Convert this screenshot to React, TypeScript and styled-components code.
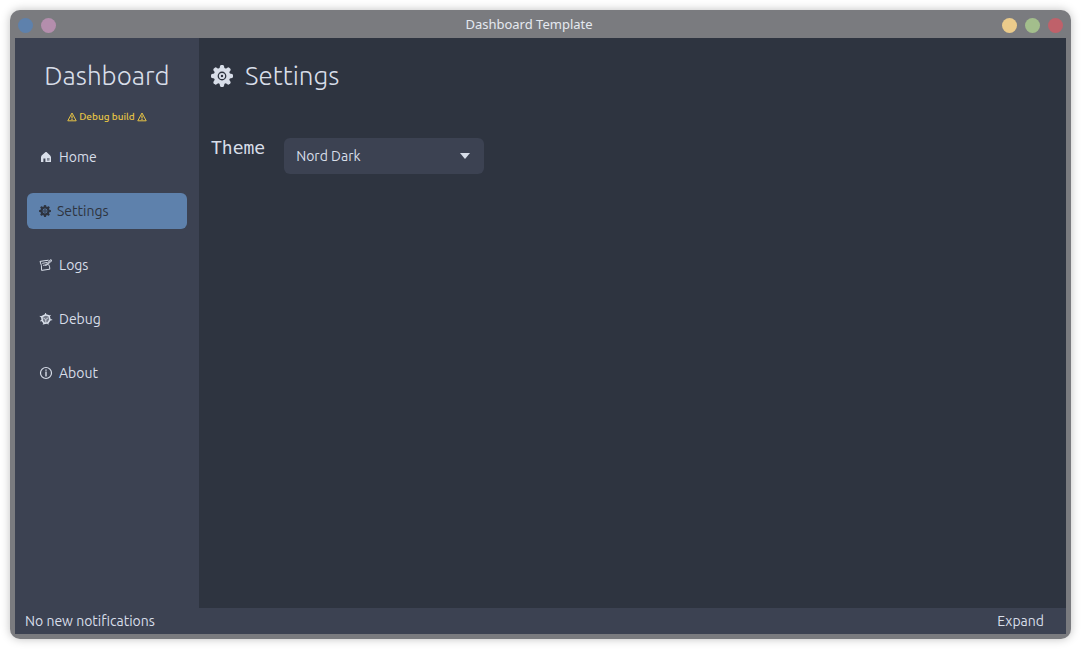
import React, { useState } from "react";
import styled, { createGlobalStyle, css } from "styled-components";

const nord = {
  frame: "#7a7b7f",
  base: "#2e3440",
  panel: "#3c4252",
  text: "#d8dee9",
  accent: "#5e81ac",
  warn: "#e6c445",
};

const GlobalStyle = createGlobalStyle`
  *, *::before, *::after { box-sizing: border-box; }
  body {
    margin: 0;
    background: #ffffff;
    color: ${nord.text};
    font-family: Ubuntu, "Open Sans", "Noto Sans", sans-serif;
    font-size: 14px;
    line-height: 20px;
  }
  button, select { font: inherit; color: inherit; }
`;

const Desktop = styled.div`
  display: flex;
  min-height: 100vh;
  padding: 10px;
`;

const Window = styled.div`
  flex: 1;
  display: flex;
  flex-direction: column;
  padding: 0 5px 5px;
  border-radius: 10px;
  background: ${nord.frame};
  box-shadow: 0 0 10px rgba(0, 0, 0, 0.25);
`;

const TitleBar = styled.header`
  display: flex;
  align-items: center;
  height: 28px;
  padding: 0 3px;
`;

const WindowTitle = styled.span`
  flex: 1;
  color: #e5e9f0;
  font-family: "Noto Sans", sans-serif;
  font-size: 13px;
  text-align: center;
`;

const DotGroup = styled.div`
  display: flex;
  gap: 8px;
  padding-top: 3px;
`;

const Dot = styled.button<{ $color: string }>`
  width: 15px;
  height: 15px;
  padding: 0;
  border: 0;
  border-radius: 50%;
  background: ${(p) => p.$color};
`;

const Body = styled.div`
  flex: 1;
  display: flex;
`;

const Sidebar = styled.aside`
  flex: none;
  width: 184px;
  padding: 20px 12px;
  background: ${nord.panel};
`;

const Brand = styled.h1`
  margin: 0;
  font-size: 26px;
  font-weight: 300;
  line-height: 36px;
  text-align: center;
`;

const BuildNote = styled.p`
  display: flex;
  align-items: center;
  justify-content: center;
  gap: 2px;
  margin: 16px 0 15px;
  color: ${nord.warn};
  font-size: 10px;
  font-weight: 500;
  line-height: 14px;
`;

const Nav = styled.nav`
  display: flex;
  flex-direction: column;
  gap: 18px;
`;

const NavItem = styled.button<{ $active: boolean }>`
  display: flex;
  align-items: center;
  gap: 6px;
  height: 36px;
  padding: 0 12px;
  border: 0;
  border-radius: 6px;
  background: transparent;
  cursor: pointer;

  svg { width: 14px; height: 14px; }

  ${(p) =>
    p.$active &&
    css`
      background: ${nord.accent};
      color: ${nord.base};
      svg { width: 12px; }
    `}
`;

const Main = styled.main`
  flex: 1;
  padding: 20px 12px;
  background: ${nord.base};
`;

const PageTitle = styled.h2`
  display: flex;
  align-items: center;
  gap: 12px;
  margin: 0 0 44px;
  font-size: 26px;
  font-weight: 300;
  line-height: 36px;

  svg { width: 22px; height: 22px; }
`;

const Field = styled.div`
  display: flex;
  gap: 19px;
`;

const FieldLabel = styled.label`
  font-family: "DejaVu Sans Mono", monospace;
  font-size: 18px;
`;

const SelectBox = styled.div`
  display: grid;
  align-items: center;
  width: 200px;

  > * { grid-area: 1 / 1; }
  svg {
    justify-self: end;
    width: 10px;
    height: 6px;
    margin-right: 14px;
    pointer-events: none;
  }
`;

const Select = styled.select`
  appearance: none;
  width: 100%;
  height: 36px;
  padding: 0 32px 0 12px;
  border: 0;
  border-radius: 6px;
  background: ${nord.panel};
`;

const StatusBar = styled.footer`
  display: flex;
  align-items: center;
  justify-content: space-between;
  height: 26px;
  padding: 0 22px 0 10px;
  background: ${nord.panel};
`;

const ExpandButton = styled.button`
  padding: 0;
  border: 0;
  background: none;
  cursor: pointer;
`;

const WarningIcon = () => (
  <svg width="10" height="10" viewBox="0 0 10 10" fill="none" stroke="currentColor" aria-hidden="true">
    <path d="M5 1 9.2 8.8H.8Z" strokeLinejoin="round" />
    <path d="M5 3.4v3M5 7v1" strokeWidth="1.2" />
  </svg>
);

const HomeIcon = () => (
  <svg viewBox="0 0 14 14" aria-hidden="true">
    <path
      fill="currentColor"
      fillRule="evenodd"
      d="M6.6 2 2.6 5.6 2 7v5h2.4V8.4h2V12H12V7l-.8-1.6L7.5 2ZM8 8h2.4v2.4H8Z"
    />
    <path fill="currentColor" opacity=".45" d="M8 8h2.4v2.4H8Z" />
  </svg>
);

const teeth = [0, 45, 90, 135, 180, 225, 270, 315];

const GearIcon = () => (
  <svg viewBox="0 0 24 24" aria-hidden="true">
    {teeth.map((angle) => (
      <path
        key={angle}
        fill="currentColor"
        transform={`rotate(${angle} 12 12)`}
        d="M9 5 9.9 1Q10.2 0 11.1 0h1.8Q13.8 0 14.1 1l.9 4Z"
      />
    ))}
    <path
      fill="currentColor"
      fillRule="evenodd"
      d="M12 3a9 9 0 1 0 0 18 9 9 0 0 0 0-18Zm0 4.2a4.8 4.8 0 1 1 0 9.6 4.8 4.8 0 0 1 0-9.6Z"
    />
    <path
      fill="currentColor"
      fillRule="evenodd"
      d="M12 8.6a3.4 3.4 0 1 0 0 6.8 3.4 3.4 0 0 0 0-6.8Zm0 2.1a1.3 1.3 0 1 1 0 2.6 1.3 1.3 0 0 1 0-2.6Z"
    />
  </svg>
);

const LogsIcon = () => (
  <svg viewBox="0 0 14 14" fill="none" stroke="currentColor" aria-hidden="true">
    <path d="M9.6 2.2 1 3.4q2 3.6 1.6 9l8.2-1.2q.2-2.4-1.2-4.8" />
    <path d="m3.2 5.4 5-1M4 7.4l3-.6" strokeWidth=".9" />
    <path fill="currentColor" fillOpacity=".5" d="M6.4 7.4 11.6 1.6 13 2.6 8 7Z" strokeWidth=".9" />
  </svg>
);

const BugIcon = () => (
  <svg viewBox="0 0 14 14" fill="none" stroke="currentColor" aria-hidden="true">
    <path
      fill="currentColor"
      fillOpacity=".35"
      d="M2.8 4.8 6.4 2.8 10 3.8l1 4-2 3-3.6.6-2-2.4Z"
      strokeWidth="1.6"
    />
    <path d="m4.4 6 2.4 1.6 2.2-1.8M6.8 7.6v2.8" strokeWidth=".9" />
    <path d="M6.6 3.4V1M3.4 5.2.8 4.4M3.2 8.4l-2 .6M5 11l-.8 1.6M8.6 11l.6 1.4M10.8 7.8h2.4M10 4.4l1.6-1" />
  </svg>
);

const InfoIcon = () => (
  <svg viewBox="0 0 14 14" aria-hidden="true">
    <circle cx="7" cy="7" r="5.5" fill="none" stroke="currentColor" strokeWidth="1.2" />
    <path fill="currentColor" d="M6.3 3.4h1.4v1.4H6.3ZM6.3 5.6h1.4v5H6.3Z" />
  </svg>
);

const pages = [
  { name: "Home", Icon: HomeIcon },
  { name: "Settings", Icon: GearIcon },
  { name: "Logs", Icon: LogsIcon },
  { name: "Debug", Icon: BugIcon },
  { name: "About", Icon: InfoIcon },
];

export default function App() {
  const [page, setPage] = useState("Settings");
  return (
    <>
      <GlobalStyle />
      <Desktop>
        <Window>
          <TitleBar>
            <DotGroup>
              <Dot $color="#5e81ac" aria-label="Menu" />
              <Dot $color="#b48ead" aria-label="Pin" />
            </DotGroup>
            <WindowTitle>Dashboard Template</WindowTitle>
            <DotGroup>
              <Dot $color="#ebcb8b" aria-label="Minimize" />
              <Dot $color="#a3be8c" aria-label="Maximize" />
              <Dot $color="#bf616a" aria-label="Close" />
            </DotGroup>
          </TitleBar>
          <Body>
            <Sidebar>
              <Brand>Dashboard</Brand>
              <BuildNote>
                <WarningIcon />
                Debug build
                <WarningIcon />
              </BuildNote>
              <Nav>
                {pages.map(({ name, Icon }) => (
                  <NavItem key={name} $active={name === page} onClick={() => setPage(name)}>
                    <Icon />
                    {name}
                  </NavItem>
                ))}
              </Nav>
            </Sidebar>
            <Main>
              <PageTitle>
                <GearIcon />
                Settings
              </PageTitle>
              <Field>
                <FieldLabel htmlFor="theme">Theme</FieldLabel>
                <SelectBox>
                  <Select id="theme" defaultValue="Nord Dark">
                    <option>Nord Dark</option>
                  </Select>
                  <svg viewBox="0 0 10 6" aria-hidden="true">
                    <path fill="currentColor" d="M0 0h10L5 6Z" />
                  </svg>
                </SelectBox>
              </Field>
            </Main>
          </Body>
          <StatusBar>
            <span>No new notifications</span>
            <ExpandButton>Expand</ExpandButton>
          </StatusBar>
        </Window>
      </Desktop>
    </>
  );
}
